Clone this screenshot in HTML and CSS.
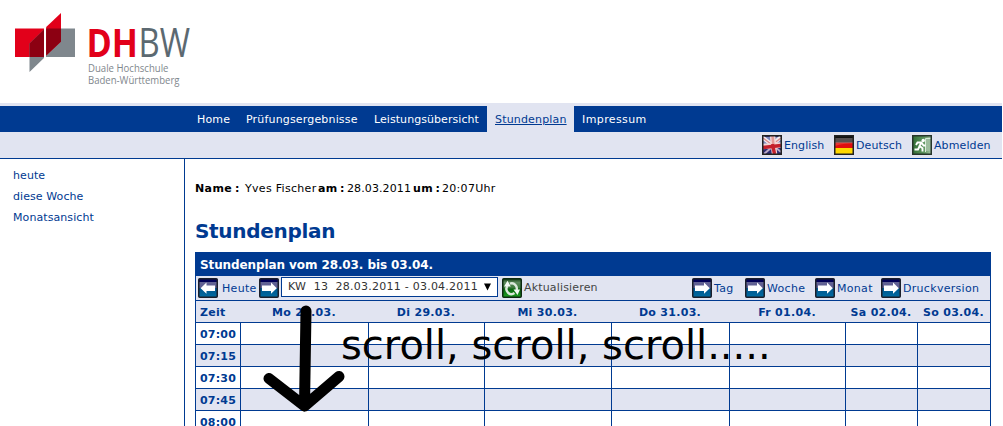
FILE: index.html
```html
<!DOCTYPE html>
<html lang="de">
<head>
<meta charset="utf-8">
<title>Stundenplan</title>
<link rel="stylesheet" href="styles.css">
</head>
<body>
<svg class="defs" width="0" height="0">
  <defs>
    <linearGradient id="sky" x1="0" y1="0" x2="0" y2="1"><stop offset="0" stop-color="#000056"/><stop offset=".17" stop-color="#000056"/><stop offset=".18" stop-color="#626294"/><stop offset=".5" stop-color="#5c5c91"/><stop offset=".51" stop-color="#00548c"/><stop offset="1" stop-color="#006ca2"/></linearGradient>
    <linearGradient id="leaf" x1="0" y1="0" x2="0" y2="1"><stop offset="0" stop-color="#123d12"/><stop offset=".2" stop-color="#5c8a5c"/><stop offset=".5" stop-color="#3b7a3b"/><stop offset=".55" stop-color="#0a6410"/><stop offset="1" stop-color="#1da022"/></linearGradient>
    <linearGradient id="moss" x1="0" y1="0" x2="1" y2="0"><stop offset="0" stop-color="#2f6b32"/><stop offset=".6" stop-color="#5d955f"/><stop offset="1" stop-color="#a8c6a8"/></linearGradient>
    <symbol id="right" viewBox="0 0 20 20"><rect x=".75" y=".75" width="18.500" height="18.500" rx="1" fill="url(#sky)" stroke="#1b1f2b" stroke-width="1.500"/><path d="M3 7.500h9V4.600l5.800 5.600-5.800 5.600v-2.900H3z" fill="#fff"/></symbol>
    <symbol id="left" viewBox="0 0 20 20"><rect x=".75" y=".75" width="18.500" height="18.500" rx="1" fill="url(#sky)" stroke="#1b1f2b" stroke-width="1.500"/><path d="M17 7.500H8.500V4.600L2.600 10.200l5.900 5.600v-2.900H17z" fill="#fff"/></symbol>
  </defs>
</svg>
<div class="page">
  <header class="banner">
    <svg class="logo" width="180" height="80" viewBox="12 10 180 80">
      <path fill="#e2001a" d="M15 28.500h29V57H15z"/>
      <path fill="#7f878d" d="M46 28.500h29V57H46zM29.500 43.500 44 29.500v28.500L29.500 72z"/>
      <path fill="#8c0012" d="M29.500 57V43.500L44 29.500V57z"/>
      <path fill="#e2001a" d="M46.200 27 61 13v28.500L46.200 55.500z"/>
      <path fill="#8c0012" d="M46.200 28.500H61V41.500L46.200 55.500z"/>
      <text class="mark mark-red" x="86.500" y="57" textLength="51.500" lengthAdjust="spacingAndGlyphs">DH</text>
      <text class="mark mark-gray" x="138.500" y="57" textLength="51.500" lengthAdjust="spacingAndGlyphs">BW</text>
      <text class="sub" x="88" y="72" textLength="80.500" lengthAdjust="spacingAndGlyphs">Duale Hochschule</text>
      <text class="sub" x="88" y="84" textLength="91.500" lengthAdjust="spacingAndGlyphs">Baden-Württemberg</text>
    </svg>
  </header>
  <nav class="nav">
    <a class="nav-home">Home</a><a class="nav-exams">Prüfungsergebnisse</a><a class="nav-marks">Leistungsübersicht</a><a class="nav-plan active">Stundenplan</a><a class="nav-imprint">Impressum</a>
  </nav>
  <div class="tools">
    <a class="tool"><svg width="20" height="20" viewBox="0 0 20 20"><path fill="#2b2a72" d="M0 0h20v20H0z"/><path fill="#7b86bd" d="M1 2h18v8H1z"/><path d="M0 2l9 7M19 2l-8 7" stroke="#f5eeee" stroke-width="4"/><path d="M1 3l8 6M19 3l-8 6" stroke="#d98a8e" stroke-width="1.500"/><path d="M10 12 2 19M13 12l6 5" stroke="#b9a9c6" stroke-width="2"/><path d="M1 11.500 19 10M10.500 1l2 18" stroke="#f1d5d5" stroke-width="5.500"/><path d="M1 12.500 19 10.500M10.500 9l2 10" stroke="#c4202c" stroke-width="3.500"/><path d="M10.500 1l.8 8" stroke="#e59a98" stroke-width="2.500"/><rect x=".75" y=".75" width="18.500" height="18.500" fill="none" stroke="#222" stroke-width="1.500"/></svg><span>English</span></a>
    <a class="tool tool-de"><svg width="20" height="20" viewBox="0 0 20 20"><path fill="#111" d="M0 0h20v20H0z"/><path fill="#575050" d="M1 3h18v5H1z"/><path fill="#e00d0d" d="M1 8h18v5H1z"/><path fill="#ee625e" opacity=".45" d="M1 7h18v1.500Q8 8 1 11z"/><path fill="#ffd800" d="M1 13h18v6H1z"/><rect x=".75" y=".75" width="18.500" height="18.500" fill="none" stroke="#222" stroke-width="1.500"/></svg><span>Deutsch</span></a>
    <a class="tool tool-out"><svg width="20" height="20" viewBox="0 0 20 20"><path fill="url(#moss)" d="M0 0h20v20H0z"/><path fill="#9cbd9d" d="M14 3h5v13h-5z"/><path d="M13.500 17V3.500H19" stroke="#d9ead9" fill="none"/><circle cx="11.200" cy="5.500" r="1.700" fill="#fff"/><path d="M9.500 7.500 7.500 11l3 2.200V16.500M7.500 11.500 6 14.500H2.500M4 10l1.500-2.500h4l2 3h2" fill="none" stroke="#fff" stroke-width="1.900"/><rect x=".75" y=".75" width="18.500" height="18.500" fill="none" stroke="#26352a" stroke-width="1.500"/></svg><span>Abmelden</span></a>
  </div>
  <div class="body">
    <aside class="side"><a>heute</a><a>diese Woche</a><a>Monatsansicht</a></aside>
    <main class="main">
      <p class="info"><b class="i-name">Name :</b><span class="i-person">Yves Fischer</span><b class="i-am">am :</b><span class="i-date">28.03.2011</span><b class="i-um">um :</b><span class="i-time">20:07Uhr</span></p>
      <h1>Stundenplan</h1>
      <section class="plan">
        <h2><span>Stundenplan vom 28.03. bis 03.04.</span></h2>
        <div class="bar">
          <svg width="20" height="20"><use href="#left"/></svg><a class="today">Heute</a><svg width="20" height="20"><use href="#right"/></svg>
          <div class="week"><span>KW&nbsp; 13&nbsp; 28.03.2011 - 03.04.2011</span><svg width="7" height="8" viewBox="0 0 7 8"><path d="M0 .5h7L3.500 7.500z" fill="#000"/></svg></div>
          <svg width="20" height="20" viewBox="0 0 20 20"><rect x=".75" y=".75" width="18.500" height="18.500" rx="1" fill="url(#leaf)" stroke="#0d2a10" stroke-width="1.500"/><path d="M5.500 8a5 5 0 0 0 7 7M14.500 12a5 5 0 0 0-6.500-6.300" fill="none" stroke="#dce9dc" stroke-width="2.400"/><path fill="#f3f9f3" d="M2 8.500 5.500 2.800l3.300 5.700zM11.500 11.500H18l-2.500 5.500z"/></svg><span class="refresh">Aktualisieren</span>
          <a class="view v-day"><svg width="20" height="20"><use href="#right"/></svg><span>Tag</span></a>
          <a class="view v-week"><svg width="20" height="20"><use href="#right"/></svg><span>Woche</span></a>
          <a class="view v-month"><svg width="20" height="20"><use href="#right"/></svg><span>Monat</span></a>
          <a class="view v-print"><svg width="20" height="20"><use href="#right"/></svg><span>Druckversion</span></a>
        </div>
        <div class="row head"><span>Zeit</span><span>Mo 28.03.</span><span>Di 29.03.</span><span>Mi 30.03.</span><span>Do 31.03.</span><span>Fr 01.04.</span><span>Sa 02.04.</span><span>So 03.04.</span></div>
        <div class="row"><b>07:00</b><i></i><i></i><i></i><i></i><i></i><i></i><i></i></div>
        <div class="row alt"><b>07:15</b><i></i><i></i><i></i><i></i><i></i><i></i><i></i></div>
        <div class="row"><b>07:30</b><i></i><i></i><i></i><i></i><i></i><i></i><i></i></div>
        <div class="row alt"><b>07:45</b><i></i><i></i><i></i><i></i><i></i><i></i><i></i></div>
        <div class="row"><b>08:00</b><i></i><i></i><i></i><i></i><i></i><i></i><i></i></div>
      </section>
    </main>
  </div>
  <svg class="arrow" width="86" height="112" viewBox="260 302 86 112"><path d="M306 311 304.500 406M269 378.500 304.500 406 339 376.500" fill="none" stroke="#000" stroke-width="11" stroke-linecap="round" stroke-linejoin="round"/></svg>
  <div class="note">scroll, scroll, scroll.....</div>
</div>
</body>
</html>
```
FILE: styles.css
```css
* { box-sizing: border-box; }
html, body { height: 426px; overflow: hidden; }
body { margin: 0; background: #fff; font: 11px/14px "DejaVu Sans", sans-serif; color: #003a91; letter-spacing: .3px; }
svg { display: block; flex: none; }
.defs { position: absolute; }
.page { position: relative; width: 1002px; height: 426px; overflow: hidden; display: flex; flex-direction: column; }
.banner { height: 106px; flex: none; padding: 10px 12px; border-bottom: 3px solid #e1e4f1; }
.mark { font: 39.5px "Open Sans", sans-serif; letter-spacing: 0; }
.mark-red { font-weight: 700; fill: #e2001a; }
.mark-gray { fill: #5c6971; }
.sub { font: 10.5px "Open Sans", sans-serif; letter-spacing: 0; fill: #7f878d; }
.nav { display: flex; height: 26px; flex: none; background: #003a91; padding-left: 189px; }
.nav a { padding: 1px 8px 0; line-height: 26px; color: #fff; white-space: nowrap; letter-spacing: .17px; }
.nav .nav-home { width: 49px; }
.nav .nav-exams { width: 128px; }
.nav .nav-marks { width: 121px; letter-spacing: .06px; }
.nav .nav-plan { width: 87px; }
.nav .nav-imprint { letter-spacing: .4px; }
.nav .active { background: #e1e4f1; color: #003a91; text-decoration: underline; }
.tools { display: flex; height: 27px; flex: none; background: #e1e4f1; border-bottom: 1px solid #003a91; padding: 3px 0 0 762px; }
.tool { display: flex; gap: 2px; width: 72px; line-height: 22px; white-space: nowrap; letter-spacing: .1px; }
.tool-de { width: 78px; }
.body { display: flex; flex: 1; min-height: 0; }
.side { width: 185px; flex: none; border-right: 1px solid #003a91; padding: 6px 0 0 13px; letter-spacing: .08px; }
.side a { display: block; line-height: 21px; }
.main { padding: 23px 0 0 10px; width: 806px; }
.info { display: flex; margin: 0; color: #000; white-space: nowrap; }
.info b { word-spacing: -1.5px; }
.i-name { width: 50px; letter-spacing: .4px; }
.i-person { width: 73px; }
.i-am { width: 29px; }
.i-date { width: 66px; letter-spacing: .1px; }
.i-um { width: 29px; }
h1 { margin: 21px 0 7px; font-size: 20px; line-height: 28px; letter-spacing: -.3px; }
.plan { width: 796px; border: 1px solid #003a91; border-top: 0; height: 180px; }
h2 { margin: 0; height: 24px; background: #003a91; color: #fff; font-size: 12px; line-height: 26px; padding-left: 4px; letter-spacing: -.1px; }
.bar { display: flex; height: 24px; background: #e1e4f1; align-items: center; white-space: nowrap; padding-left: 2px; }
.today { width: 37px; margin-left: 4px; padding-top: 1px; }
.week { display: flex; align-items: center; justify-content: space-between; width: 217px; height: 20px; margin: -2px 4px 0 2px; padding: 0 6px; border: 1px solid #003a91; background: #fff; color: #333; letter-spacing: .24px; }
.refresh { color: #444; margin-left: 2px; width: 168px; letter-spacing: .16px; }
.view { display: flex; gap: 2px; line-height: 20px; align-items: center; }
.view span { padding-top: 1px; }
.v-day { width: 53px; }
.v-week { width: 70px; }
.v-month { width: 66px; }
.row { display: grid; grid-template-columns: 44px 128px 116px 127px 118px 116px 72px 73px; height: 22px; border-top: 1px solid #003a91; line-height: 22px; }
.row b { padding: 1px 0 0 4px; line-height: 20px; height: 21px; letter-spacing: .2px; padding-top: 2px; }
.row i { border-left: 1px solid #003a91; }
.alt, .head { background: #e1e4f1; }
.head { font-weight: 700; text-align: center; }
.head span { padding-top: 1px; height: 21px; }
.head span:first-child { text-align: left; padding-left: 4px; }
.arrow { position: absolute; left: 260px; top: 302px; }
.note { position: absolute; left: 341px; top: 322px; font-size: 40px; line-height: 47px; letter-spacing: 0; color: #000; white-space: nowrap; }
```
